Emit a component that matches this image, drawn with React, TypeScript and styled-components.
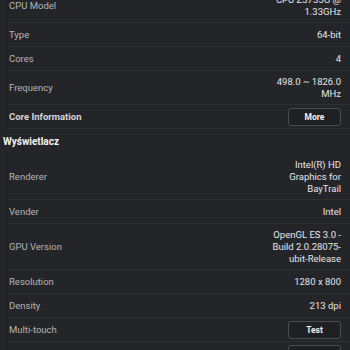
import React from "react";
import styled, { createGlobalStyle } from "styled-components";

const Global = createGlobalStyle`
  html, body {
    margin: 0;
    padding: 0;
    background: #242529;
    overflow: hidden;
  }
  body {
    font-family: Roboto, "Noto Sans", sans-serif;
    -webkit-font-smoothing: antialiased;
  }
`;

const Page = styled.div`
  width: 350px;
  height: 350px;
  overflow: hidden;
`;

const Scroller = styled.div`
  margin-top: -11px;
`;

const Group = styled.div`
  margin-left: 7px;
  border-left: 1px solid #1d1e21;
`;

const Row = styled.div`
  box-sizing: border-box;
  display: flex;
  justify-content: space-between;
  align-items: center;
  min-height: 24px;
  padding: 5px 9px 4px 1px;
  border-bottom: 1px solid #2f3034;
`;

const ButtonRow = styled(Row)`
  padding-top: 3px;
  padding-bottom: 2px;
`;

const Label = styled.span<{ bold?: boolean }>`
  font-size: 9.5px;
  line-height: 12px;
  color: ${(p) => (p.bold ? "#d6d6d8" : "#b4b5b8")};
  font-weight: ${(p) => (p.bold ? 700 : 400)};
`;

const Value = styled.span`
  font-size: 9.5px;
  line-height: 12px;
  color: #e6e6e8;
  text-align: right;
  white-space: pre-line;
`;

const Button = styled.button`
  box-sizing: border-box;
  width: 53px;
  height: 18px;
  padding: 0;
  border: 1px solid #4b4c51;
  border-radius: 3px;
  background: #1f2023;
  color: #f2f2f2;
  font-family: Roboto, sans-serif;
  font-size: 8.5px;
  font-weight: 700;
`;

const SectionHeader = styled.div`
  box-sizing: border-box;
  height: 25px;
  display: flex;
  align-items: center;
  padding-left: 3px;
  font-size: 10px;
  font-weight: 700;
  color: #f4f4f4;
`;

type Item = { label: string; value?: string; button?: string; bold?: boolean };

const cpu: Item[] = [
  { label: "CPU Model", value: "CPU Z3735G @\n1.33GHz" },
  { label: "Type", value: "64-bit" },
  { label: "Cores", value: "4" },
  { label: "Frequency", value: "498.0 ~ 1826.0\nMHz" },
  { label: "Core Information", button: "More", bold: true },
];

const display: Item[] = [
  { label: "Renderer", value: "Intel(R) HD\nGraphics for\nBayTrail" },
  { label: "Vender", value: "Intel" },
  { label: "GPU Version", value: "OpenGL ES 3.0 -\nBuild 2.0.28075-\nubit-Release" },
  { label: "Resolution", value: "1280 x 800" },
  { label: "Density", value: "213 dpi" },
  { label: "Multi-touch", button: "Test" },
  { label: "Sensors", button: "Test" },
];

const renderItem = (it: Item) =>
  it.button ? (
    <ButtonRow key={it.label}>
      <Label bold={it.bold}>{it.label}</Label>
      <Button>{it.button}</Button>
    </ButtonRow>
  ) : (
    <Row key={it.label}>
      <Label>{it.label}</Label>
      <Value>{it.value}</Value>
    </Row>
  );

export default function App() {
  return (
    <Page>
      <Global />
      <Scroller>
        <Group>{cpu.map(renderItem)}</Group>
        <SectionHeader>Wyświetlacz</SectionHeader>
        <Group>{display.map(renderItem)}</Group>
      </Scroller>
    </Page>
  );
}
